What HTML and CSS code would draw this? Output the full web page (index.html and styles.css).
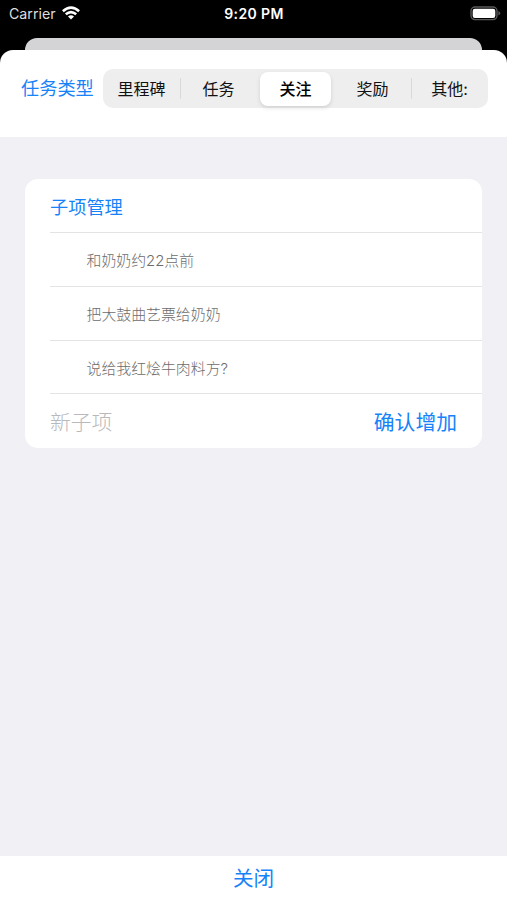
FILE: index.html
```html
<!DOCTYPE html>
<html lang="zh-CN">
<head>
<meta charset="utf-8">
<title>任务类型</title>
<link rel="stylesheet" href="styles.css">
</head>
<body>
<div class="screen">
  <header class="status">
    <div class="carrier"><span>Carrier</span>
      <svg class="wifi" viewBox="0 0 18 14" width="18" height="14" fill="none" stroke="#fff" stroke-width="2.6">
        <path d="M.9 5.2Q9-2 17.1 5.2"/><path d="M3.8 8.3Q9 3.9 14.2 8.3"/><path d="M6 10.5Q9 7.9 12 10.5L9 13.6Z" fill="#fff" stroke="none"/>
      </svg>
    </div>
    <div class="time">9:20 PM</div>
    <svg class="battery" viewBox="0 0 31 15" width="31" height="15">
      <rect x="1" y="1" width="26" height="12.6" rx="4" fill="none" stroke="#59595b" stroke-width="1.4"/>
      <rect x="2.7" y="2.7" width="22.6" height="9.2" rx="2.2" fill="#fff"/>
      <path d="M28.4 5Q30.2 5.8 30.2 7.3T28.4 9.6Z" fill="#59595b"/>
    </svg>
  </header>
  <div class="behind"></div>
  <main class="sheet">
    <section class="toolbar">
      <h1 class="title">任务类型</h1>
      <nav class="segments">
        <button class="segment">里程碑</button>
        <button class="segment divided">任务</button>
        <button class="segment selected">关注</button>
        <button class="segment">奖励</button>
        <button class="segment divided">其他:</button>
      </nav>
    </section>
    <section class="content">
      <div class="list">
        <div class="row heading">子项管理</div>
        <div class="row item">和奶奶约22点前</div>
        <div class="row item">把大鼓曲艺票给奶奶</div>
        <div class="row item">说给我红烩牛肉料方?</div>
        <div class="row entry"><span class="placeholder">新子项</span><button class="add">确认增加</button></div>
      </div>
    </section>
    <footer class="footer"><button class="close">关闭</button></footer>
  </main>
</div>
</body>
</html>
```
FILE: styles.css
```css
* { box-sizing: border-box; }
body {
  margin: 0;
  background: #000;
  font-family: Inter, "Noto Sans CJK SC", sans-serif;
}
button {
  margin: 0;
  padding: 0;
  border: 0;
  background: none;
  font: inherit;
  color: inherit;
}
.screen {
  width: 507px;
  height: 900px;
  display: flex;
  flex-direction: column;
  overflow: hidden;
}
.status {
  height: 38px;
  flex: none;
  display: grid;
  grid-template-columns: 1fr auto 1fr;
  align-items: start;
  padding: 5px 6px 0 7px;
  color: #fff;
  font-size: 14px;
  line-height: 18px;
}
.carrier {
  display: flex;
  gap: 6px;
  padding-left: 2px;
  color: #dedede;
  font-size: 14.2px;
}
.wifi { margin-top: 1px; }
.time { font-weight: 600; letter-spacing: 0.4px; }
.battery { justify-self: end; margin-top: 1px; }
.behind {
  height: 12px;
  flex: none;
  margin: 0 25px;
  border-radius: 12px 12px 0 0;
  background: #d4d4d7;
}
.sheet {
  flex: 1;
  display: flex;
  flex-direction: column;
  border-radius: 13px 13px 0 0;
  background: #fff;
  overflow: hidden;
}
.toolbar {
  height: 87px;
  flex: none;
  display: flex;
  align-items: flex-start;
  padding: 19px 19px 0 21px;
}
.title {
  width: 83px;
  margin: 0;
  color: #1683f8;
  font-size: 18.2px;
  font-weight: 400;
  line-height: 39px;
}
.segments {
  flex: 1;
  height: 39px;
  display: grid;
  grid-template-columns: repeat(5, 1fr);
  margin-left: -1px;
  padding: 3px 0;
  border-radius: 10px;
  background: #eee;
}
.segment {
  display: flex;
  align-items: center;
  justify-content: center;
  position: relative;
  padding-top: 1px;
  color: #111;
  font-size: 16px;
  line-height: 33px;
}
.divided::before {
  content: "";
  position: absolute;
  left: 0;
  top: 6px;
  width: 1px;
  height: 21px;
  background: #d9d9da;
}
.selected {
  margin: 0 3px;
  border-radius: 8px;
  background: #fff;
  font-weight: 500;
  color: #000;
  box-shadow: 0 2px 4px rgba(0, 0, 0, 0.12);
}
.content {
  flex: 1;
  padding: 42px 25px 0;
  background: #f0f0f5;
}
.list {
  height: 269px;
  display: grid;
  grid-template-rows: repeat(3, 54px) 1fr 54px;
  padding-left: 25px;
  border-radius: 13px;
  background: #fff;
}
.row {
  display: flex;
  align-items: center;
  border-bottom: 1px solid #e3e3e5;
}
.heading {
  color: #1683f8;
  font-size: 18.2px;
}
.item {
  padding-left: 36.5px;
  color: #6c6c6c;
  font-size: 14.9px;
  font-weight: 300;
}
.entry {
  justify-content: space-between;
  padding: 0 25px 1px 0;
  border-bottom: 0;
  font-size: 20.8px;
}
.placeholder { color: #b9b9bb; font-weight: 300; }
.add { color: #1683f8; }
.footer {
  height: 44px;
  flex: none;
  display: flex;
  align-items: center;
  justify-content: center;
  padding-bottom: 2px;
  color: #1683f8;
  font-size: 20.6px;
}
```
